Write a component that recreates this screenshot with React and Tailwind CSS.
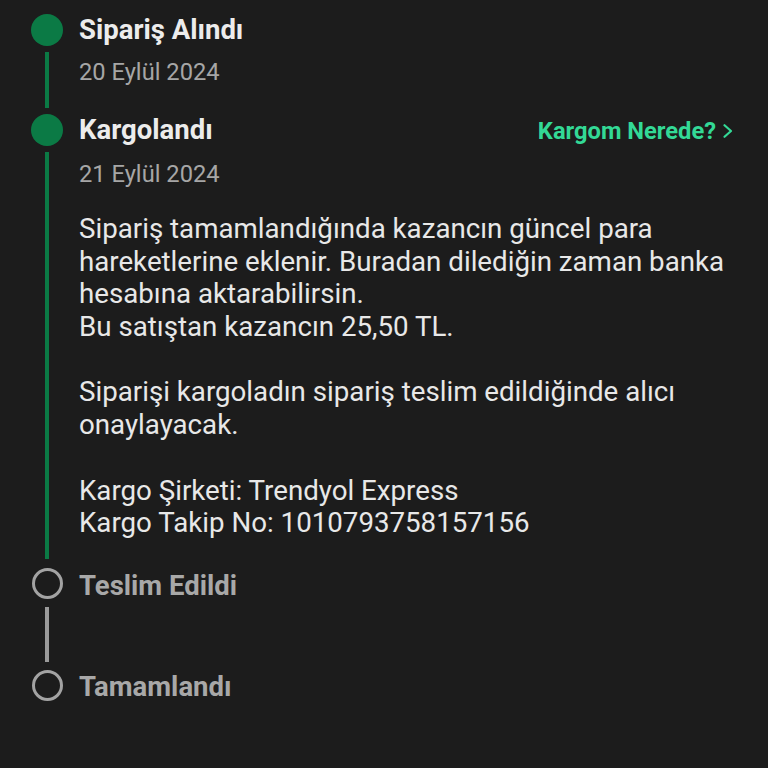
import React from 'react';

const bodyLines = [
    'Sipariş tamamlandığında kazancın güncel para',
    'hareketlerine eklenir. Buradan dilediğin zaman banka',
    'hesabına aktarabilirsin.',
    'Bu satıştan kazancın 25,50 TL.',
    '',
    'Siparişi kargoladın sipariş teslim edildiğinde alıcı',
    'onaylayacak.',
    '',
    'Kargo Şirketi: Trendyol Express',
    'Kargo Takip No: 1010793758157156',
];

function Dot({ done }) {
    return done ? (
        <div className="w-8 h-8 rounded-full bg-[#0b7a45] shrink-0" />
    ) : (
        <div className="w-[31px] h-[31px] rounded-full border-[3px] border-[#a3a3a3] shrink-0" />
    );
}

export default function App() {
    return (
        <div
            className="w-[768px] h-[768px] bg-[#1c1c1c] overflow-hidden pl-[31px] pr-[35px] pt-[14px]"
            style={{ fontFamily: 'Roboto, "Noto Sans", sans-serif' }}
        >
            {/* Sipariş Alındı */}
            <div className="flex h-[100px]">
                <div className="flex flex-col items-center w-8">
                    <Dot done />
                    <div className="w-1 flex-1 my-[6px] bg-[#0b7a45]" />
                </div>
                <div className="ml-4">
                    <div className="text-[27.5px] leading-8 font-bold text-[#ececec]">Sipariş Alındı</div>
                    <div className="mt-3 text-[23.7px] leading-7 text-[#a6a6a6]">20 Eylül 2024</div>
                </div>
            </div>

            {/* Kargolandı */}
            <div className="flex h-[454px]">
                <div className="flex flex-col items-center w-8">
                    <Dot done />
                    <div className="w-1 flex-1 mt-[6px] mb-[9px] bg-[#0b7a45]" />
                </div>
                <div className="ml-4 flex-1">
                    <div className="flex items-center justify-between h-8">
                        <div className="text-[27.5px] leading-8 font-bold text-[#ececec]">Kargolandı</div>
                        <div className="flex items-center text-[23.7px] leading-8 font-bold text-[#33d996] mt-[2px]">
                            Kargom Nerede?
                            <svg width="10" height="14" viewBox="0 0 10 14" className="ml-[7px]" fill="none">
                                <path d="M1.5 1.2 L8 7 L1.5 12.8" stroke="#33d996" strokeWidth="2.2" strokeLinecap="round" strokeLinejoin="round" />
                            </svg>
                        </div>
                    </div>
                    <div className="mt-[14px] text-[23.7px] leading-7 text-[#a6a6a6]">21 Eylül 2024</div>
                    <div className="mt-[25px] text-[27.7px] leading-[32.7px] text-[#e8e8e8]">
                        {bodyLines.map((l, i) => (
                            <div key={i} className="h-[32.7px] whitespace-nowrap">{l}</div>
                        ))}
                    </div>
                </div>
            </div>

            {/* Teslim Edildi */}
            <div className="flex h-[102px]">
                <div className="flex flex-col items-center w-8">
                    <Dot />
                    <div className="w-1 flex-1 my-2 bg-[#9a9a9a]" />
                </div>
                <div className="ml-4 mt-[2px] text-[27.5px] leading-[32px] font-bold text-[#a8a8a8]">Teslim Edildi</div>
            </div>

            {/* Tamamlandı */}
            <div className="flex">
                <div className="flex flex-col items-center w-8">
                    <Dot />
                </div>
                <div className="ml-4 mt-[1px] text-[27.5px] leading-[32px] font-bold text-[#a8a8a8]">Tamamlandı</div>
            </div>
        </div>
    );
}
